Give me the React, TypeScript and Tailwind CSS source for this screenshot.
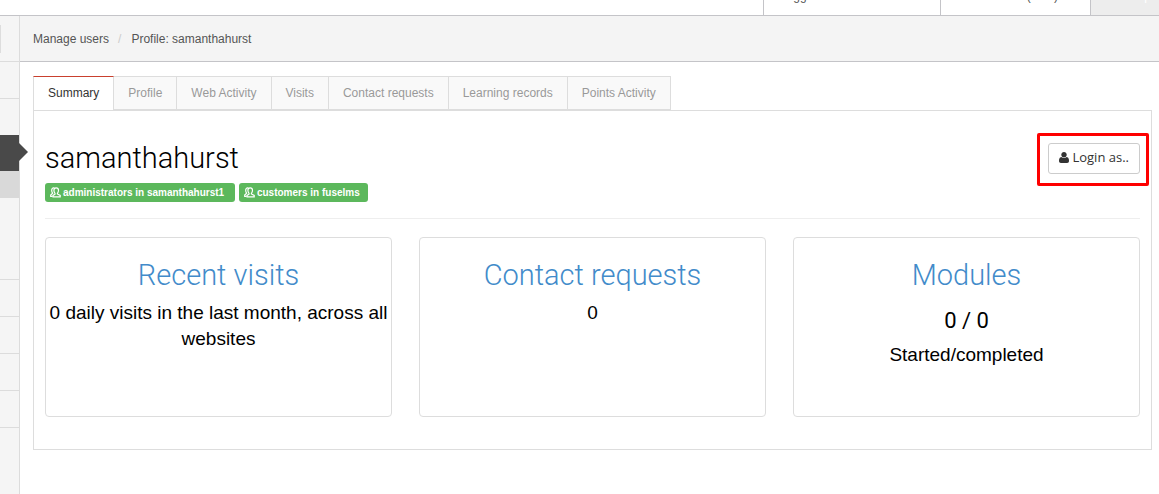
import React from "react";

const tabs = ["Summary", "Profile", "Web Activity", "Visits", "Contact requests", "Learning records", "Points Activity"];

function UserIcon() {
  return (
    <svg viewBox="0 256 1408 1536" className="h-[11px] w-[10px] shrink-0" fill="currentColor" aria-hidden="true">
      <path d="M1408 1533q0 120-73 189.500t-194 69.500h-874q-121 0-194-69.500t-73-189.500q0-53 3.500-103.500t14-109 26.500-108.500 43-97.500 62-81 85.500-53.500 111.500-20q9 0 42 21.500t74.500 48 108 48 133.500 21.500 133.500-21.500 108-48 74.500-48 42-21.500q61 0 111.500 20t85.500 53.500 62 81 43 97.500 26.500 108.500 14 109 3.500 103.500zM1088 640q0 159-112.500 271.500t-271.500 112.500-271.500-112.500-112.500-271.500 112.500-271.500 271.500-112.500 271.500 112.500 112.500 271.500z" />
    </svg>
  );
}

function GroupIcon() {
  return (
    <svg viewBox="0 0 11 11" className="h-[11px] w-[11px] shrink-0" fill="none" stroke="currentColor" strokeWidth="1.2" aria-hidden="true">
      <path d="M5 6.400C4.200 5.400 3.900 4.600 3.900 3.300C3.900 1.700 4.600 .8 6.200 .8S8.500 1.700 8.500 3.300C8.500 4.600 8.200 5.400 7.400 6.400V7L10.200 8.400V9.900H3V8.400L5 7.200Z" />
      <path d="M4.400 .9C2.600 .5 1.700 1.600 1.700 3.300C1.700 4.500 2 5.400 2.600 6.200L.7 8V9.400H2.600" />
    </svg>
  );
}

function Badge({ children }: { children: React.ReactNode }) {
  return (
    <span className="flex h-[19px] items-center gap-0.5 rounded-[3px] bg-[#5cb85c] pr-2 pl-[5px] text-[10px] leading-none font-bold whitespace-pre text-white">
      <GroupIcon />
      {children}
    </span>
  );
}

function Card({ title, children }: { title: string; children: React.ReactNode }) {
  return (
    <section className="min-h-[180px] rounded-[4px] border border-[#ddd] pt-[21px] text-center text-black">
      <h2 className="font-[Roboto] text-[29px] leading-[33px] font-light text-[#428bca]">
        <a href="#details">{title}</a>
      </h2>
      {children}
    </section>
  );
}

export default function App() {
  return (
    <div className="min-h-screen bg-white font-['Liberation_Sans',Arial,sans-serif] text-[12px] text-[#555]">
      <header className="flex h-4 items-stretch justify-end overflow-hidden border-b border-[#c4c4c8]">
        <div className="flex w-[177px] items-end border-l border-[#c4c4c8] pb-[11px] pl-4 leading-4">Logged in</div>
        <div className="flex w-[150px] items-end justify-end border-l border-[#c4c4c8] pr-8 pb-[11px] leading-4">Basket (0.00)</div>
        <div className="flex w-[69px] items-end justify-end border-l border-[#c4c4c8] bg-[#ededed] pr-2 pb-[11px] leading-4 text-white">Help</div>
      </header>
      <div className="flex min-h-[calc(100vh-16px)]">
        <aside className="w-5 shrink-0 border-r border-[#dcdcdc] bg-[#f5f5f5]">
          <div className="flex h-[46px] items-center border-b border-[#dcdcdc]">
            <div className="h-7 w-px bg-[#ddd]" />
          </div>
          <div className="h-[37px] border-b border-[#dcdcdc]" />
          <div className="h-9" />
          <div className="relative h-9 bg-[#494949]">
            <svg viewBox="0 0 9 18" className="absolute top-2 left-full h-[18px] w-[9px] text-[#494949]" aria-hidden="true">
              <path d="M0 0L9 9L0 18Z" fill="currentColor" />
            </svg>
          </div>
          <div className="h-[27px] bg-[#d9d9d9]" />
          <div className="h-[82px] border-b border-[#dcdcdc]" />
          <div className="h-[37px] border-b border-[#dcdcdc]" />
          <div className="h-[37px] border-b border-[#dcdcdc]" />
          <div className="h-[37px] border-b border-[#dcdcdc]" />
          <div className="h-[37px] border-b border-[#dcdcdc]" />
        </aside>
        <main className="min-w-0 flex-1">
          <nav aria-label="Breadcrumb" className="flex h-[46px] items-center border-b border-[#c4c4c8] bg-[#f4f4f4] px-[13px]">
            <a href="#users">Manage users</a>
            <span className="pr-[10px] pl-[9px] text-[#ccc]">/</span>
            <span>Profile: samanthahurst</span>
          </nav>
          <div className="pt-[14px] pr-[7px] pl-[13px]">
            <div role="tablist" className="flex">
              {tabs.map((tab, i) => (
                <button
                  key={tab}
                  type="button"
                  role="tab"
                  aria-selected={i === 0}
                  className={
                    i === 0
                      ? "h-[34px] border-x border-t border-x-[#ddd] border-t-[#c9402e] bg-white px-[14px] pb-px text-[#333]"
                      : "h-[34px] border-y border-r border-[#ddd] bg-[#f9f9f9] px-[14px] text-[#999]"
                  }
                >
                  {tab}
                </button>
              ))}
            </div>
            <div className="border border-[#ddd] px-[11px] pt-[31px] pb-8">
              <div className="flex items-start justify-between">
                <div>
                  <h1 className="font-[Roboto] text-[29px] leading-[33px] font-light text-black">samanthahurst</h1>
                  <div className="mt-2 flex gap-1">
                    <Badge>{"administrators in samanthahurst1 "}</Badge>
                    <Badge>customers in fuselms</Badge>
                  </div>
                </div>
                <div className="-mt-[9px] -mr-[9px] rounded-[2px] border-3 border-[#fe0000] pt-[7px] pr-[6px] pb-[9px] pl-2">
                  <button type="button" className="flex h-[31px] items-center gap-[3px] rounded-[3px] border border-[#ccc] bg-white pr-[10px] pb-[2px] pl-[10px] font-['Open_Sans'] text-[13px] text-[#333]">
                    <UserIcon />
                    Login as..
                  </button>
                </div>
              </div>
              <hr className="mt-4 border-[#eee]" />
              <div className="mt-[18px] grid grid-cols-3 gap-[27px]">
                <Card title="Recent visits">
                  <p className="mt-2 text-[19px] leading-[26px]">0 daily visits in the last month, across all websites</p>
                </Card>
                <Card title="Contact requests">
                  <p className="mt-2 text-[19px] leading-[26px]">0</p>
                </Card>
                <Card title="Modules">
                  <p className="mt-4 font-[Roboto] text-[22px] leading-[26px]">0 / 0</p>
                  <p className="mt-2 text-[19px] leading-[26px]">Started/completed</p>
                </Card>
              </div>
            </div>
          </div>
        </main>
      </div>
    </div>
  );
}
